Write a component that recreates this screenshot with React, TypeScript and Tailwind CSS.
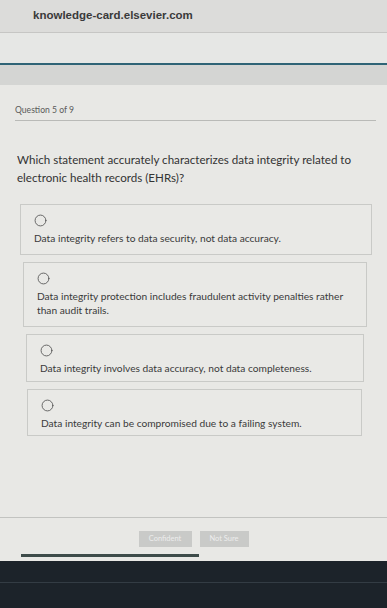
import { Circle } from 'lucide-react'

const OPTIONS = [
  { text: 'Data integrity refers to data security, not data accuracy.', cls: 'ml-[20px] mr-[15px] h-[51px]' },
  { text: 'Data integrity protection includes fraudulent activity penalties rather than audit trails.', cls: 'ml-[23px] mr-[20px] h-[65px]' },
  { text: 'Data integrity involves data accuracy, not data completeness.', cls: 'ml-[26px] mr-[23px] h-[48px]' },
  { text: 'Data integrity can be compromised due to a failing system.', cls: 'ml-[27px] mr-[25px] h-[47px]' },
]

export default function App() {
  return (
    <div className="w-[387px] h-[608px] overflow-hidden flex flex-col bg-[#e8e8e5]" style={{ fontFamily: 'Lato, "Open Sans", sans-serif' }}>
      {/* Browser address bar */}
      <div className="h-[33px] shrink-0 bg-[#dcdcda] border-b border-[#c6c6c4] flex items-center pl-[33px]">
        <span className="text-[11.5px] font-semibold text-[#3a3a3a]" style={{ fontFamily: '"Liberation Sans", Arial, sans-serif' }}>
          knowledge-card.elsevier.com
        </span>
      </div>
      <div className="h-[30px] shrink-0 bg-[#e6e7e5]" />
      <div className="h-[2px] shrink-0 bg-[#2f6476]" />
      <div className="h-[20px] shrink-0 bg-[#d4d5d3]" />

      {/* Quiz body */}
      <div className="flex-1 flex flex-col">
        <div className="ml-[15px] mr-[11px] mt-[20px] border-b border-[#b9bab7] pb-[5px] text-[8.6px] leading-[10px] text-[#5a5a5a]">
          Question 5 of 9
        </div>

        <p className="ml-[17px] mr-[20px] mt-[30px] text-[11.6px] leading-[18px] text-[#333]">
          Which statement accurately characterizes data integrity related to electronic health records (EHRs)?
        </p>

        <div className="mt-[17px] flex flex-col gap-[7px]">
          {OPTIONS.map((o) => (
            <div key={o.text} className={`${o.cls} border border-[#c9cac7] bg-[#e9e9e6] pl-[13px] pr-[12px] pt-[9px]`}>
              <Circle size={13} strokeWidth={1.6} className="text-[#555]" />
              <p className="mt-[4px] text-[10.2px] leading-[14px] text-[#3a3a3a]">{o.text}</p>
            </div>
          ))}
        </div>

        <div className="mt-auto border-t border-[#c2c3c0] h-[44px] flex flex-col">
          <div className="flex justify-center gap-[8px] mt-[13px]">
            <button className="w-[53px] h-[16px] bg-[#c9cac8] text-[7.5px] leading-[16px] text-[#ededed]">Confident</button>
            <button className="w-[49px] h-[16px] bg-[#c9cac8] text-[7.5px] leading-[16px] text-[#ededed]">Not Sure</button>
          </div>
          <div className="ml-[21px] mt-[7px] w-[178px] h-[3px] bg-[#3d4b49]" />
        </div>
      </div>

      {/* Device bezel */}
      <div className="h-[47px] shrink-0 bg-[#1c232a] flex flex-col">
        <div className="h-[21px]" />
        <div className="h-[1px] bg-[#333c44]" />
      </div>
    </div>
  )
}
